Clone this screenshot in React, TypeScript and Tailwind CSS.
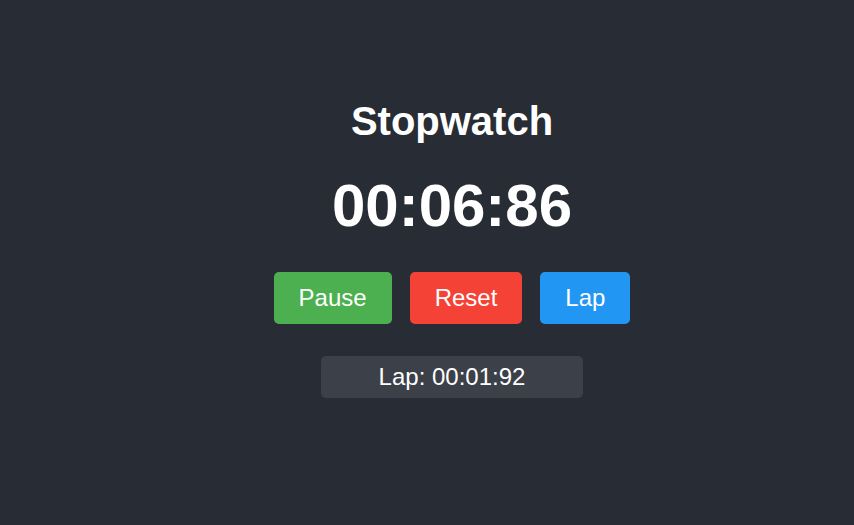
export default function App() {
  const buttons = [
    { label: 'Pause', bg: 'bg-[#4caf50]' },
    { label: 'Reset', bg: 'bg-[#f44336]' },
    { label: 'Lap', bg: 'bg-[#2196f3]' },
  ];

  return (
    <div
      className="min-h-screen bg-[#282c34] text-white pt-[98px] pl-[50px] flex flex-col items-center"
      style={{ fontFamily: '"Liberation Sans", Arial, sans-serif' }}
    >
      <h1 className="text-[40px] font-bold leading-[46px]">Stopwatch</h1>
      <div className="mt-[27px] text-[60px] font-bold leading-[69px]">00:06:86</div>

      <div className="mt-[32px] flex gap-[18px]">
        {buttons.map((b) => (
          <button
            key={b.label}
            className={`${b.bg} h-[52px] px-[25px] rounded-[5px] text-[24px] text-white`}
          >
            {b.label}
          </button>
        ))}
      </div>

      {/* Vueltas */}
      <ul className="mt-[32px]">
        <li className="w-[262px] h-[42px] flex items-center justify-center rounded-[5px] bg-[#3c4049] text-[24px]">
          Lap: 00:01:92
        </li>
      </ul>
    </div>
  );
}
